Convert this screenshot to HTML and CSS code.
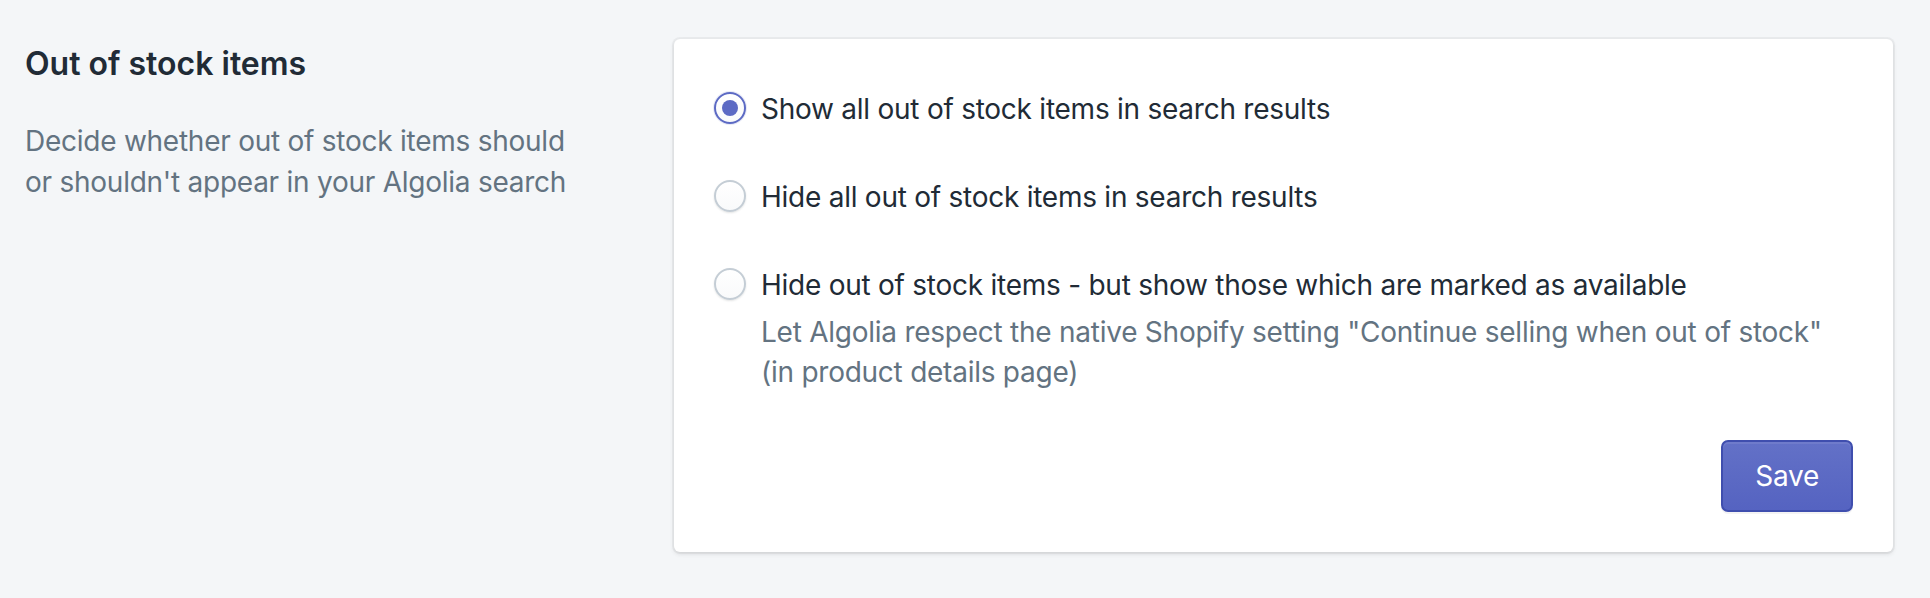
FILE: index.html
```html
<!DOCTYPE html>
<html lang="en">
<head>
<meta charset="utf-8">
<title>Out of stock items</title>
<link rel="stylesheet" href="styles.css">
</head>
<body>
<div class="page">
  <section class="annotation">
    <h2 class="heading">Out of stock items</h2>
    <p class="description">Decide whether out of stock items should<br>or shouldn't appear in your Algolia search</p>
  </section>
  <section class="card">
    <ul class="choices">
      <li class="choice">
        <span class="radio radio--checked"><span class="radio-dot"></span></span>
        <div class="choice-body">
          <div class="choice-label">Show all out of stock items in search results</div>
        </div>
      </li>
      <li class="choice">
        <span class="radio"></span>
        <div class="choice-body">
          <div class="choice-label">Hide all out of stock items in search results</div>
        </div>
      </li>
      <li class="choice">
        <span class="radio"></span>
        <div class="choice-body">
          <div class="choice-label">Hide out of stock items - but show those which are marked as available</div>
          <div class="choice-help">Let Algolia respect the native Shopify setting "Continue selling when out of stock"<br>(in product details page)</div>
        </div>
      </li>
    </ul>
    <div class="actions">
      <button class="button-primary" type="button">Save</button>
    </div>
  </section>
</div>
</body>
</html>
```

FILE: styles.css
```css
html, body {
  margin: 0;
  padding: 0;
  background: #f4f6f8;
}

body {
  font-family: Inter, "Noto Sans", "Liberation Sans", sans-serif;
  color: #212b36;
  -webkit-font-smoothing: antialiased;
}

.page {
  display: flex;
  align-items: flex-start;
  gap: 40px;
  padding: 39px 37px 46px 25px;
}

.annotation {
  flex: 1 1 auto;
  min-width: 0;
}

.heading {
  margin: 0;
  padding-top: 1px;
  font-size: 32px;
  line-height: 48px;
  font-weight: 600;
  color: #212b36;
}

.description {
  margin: 33px 0 0;
  font-size: 28px;
  line-height: 41px;
  letter-spacing: -0.25px;
  color: #637381;
}

.card {
  flex: 0 0 1219px;
  box-sizing: border-box;
  background: #ffffff;
  border-radius: 6px;
  box-shadow: 0 0 0 2px rgba(63, 63, 68, 0.05), 0 2px 4px 0 rgba(63, 63, 68, 0.15);
  padding: 50px 40px 40px;
}

.choices {
  list-style: none;
  margin: 0;
  padding: 0;
  display: flex;
  flex-direction: column;
  gap: 48px;
}

.choice {
  display: flex;
  align-items: flex-start;
  gap: 15px;
}

.radio {
  flex: 0 0 auto;
  box-sizing: border-box;
  width: 32px;
  height: 32px;
  margin-top: 3px;
  border-radius: 50%;
  border: 2px solid #c4cdd5;
  background: linear-gradient(180deg, #ffffff, #f9fafb);
  box-shadow: 0 1px 2px 0 rgba(22, 29, 37, 0.12);
  display: flex;
  align-items: center;
  justify-content: center;
}

.radio--checked {
  border-color: #5c6ac4;
  box-shadow: 0 0 0 1px rgba(92, 106, 196, 0.15);
}

.radio-dot {
  width: 16px;
  height: 16px;
  border-radius: 50%;
  background: #5c6ac4;
}

.choice-label {
  font-size: 28px;
  line-height: 40px;
  letter-spacing: -0.25px;
  color: #212b36;
}

.choice-help {
  margin-top: 7px;
  font-size: 28px;
  line-height: 40px;
  letter-spacing: -0.25px;
  color: #637381;
}

.actions {
  display: flex;
  justify-content: flex-end;
  margin-top: 48px;
}

.button-primary {
  box-sizing: border-box;
  height: 72px;
  min-width: 129px;
  padding: 0 32px;
  border: 2px solid #3f4eae;
  border-radius: 7px;
  background: linear-gradient(180deg, #6371c7, #5563c1);
  box-shadow: inset 0 2px 0 0 #6f7bcb, 0 2px 0 0 rgba(22, 29, 37, 0.05);
  color: #ffffff;
  font-family: Inter, "Noto Sans", "Liberation Sans", sans-serif;
  font-size: 28px;
  line-height: 40px;
  letter-spacing: -0.25px;
  font-weight: 400;
  cursor: pointer;
}
```
